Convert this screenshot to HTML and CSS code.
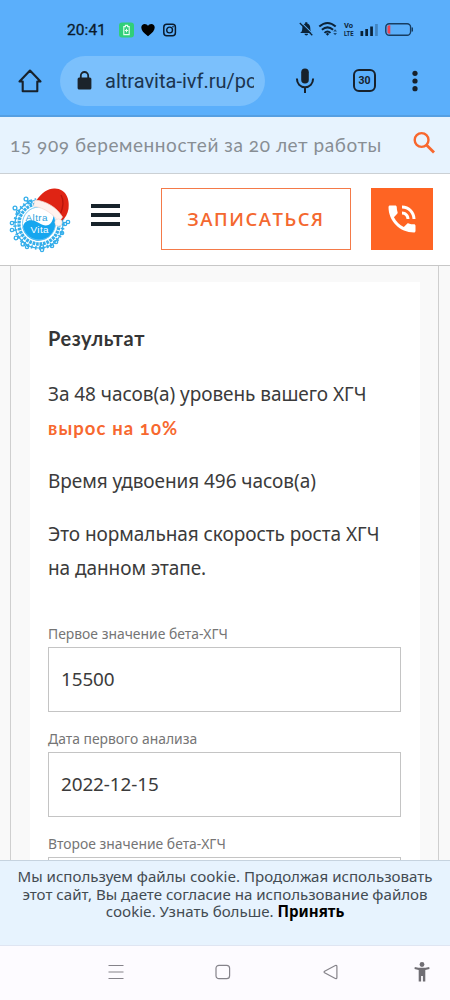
FILE: index.html
```
<!DOCTYPE html>
<html lang="ru">
<head>
<meta charset="utf-8">
<title>АльтраВита — калькулятор ХГЧ</title>
<link rel="stylesheet" href="styles.css">
</head>
<body>
<div class="phone">
  <div class="browser">
    <div class="status">
      <span class="clock">20:41</span>
      <svg class="status-left" width="60" height="16" viewBox="0 0 60 16">
        <rect x="0" y="0.5" width="15" height="15" rx="3" fill="#31cf79"/>
        <path d="M6.4 3.4h2.2v1.2h1.6v8H4.8v-8h1.6z" fill="none" stroke="#e8fff1" stroke-width="1.1"/>
        <path d="M7.5 6.8v3.4M5.9 8.5h3.2" stroke="#e8fff1" stroke-width="1.1"/>
        <path d="M29 14.2C24.5 10.8 22.3 8.4 22.3 5.5C22.3 3.3 23.9 2 25.7 2C27.1 2 28.3 2.7 29 3.9C29.7 2.7 30.9 2 32.3 2C34.2 2 35.7 3.3 35.7 5.5C35.7 8.4 33.5 10.8 29 14.2z" fill="#000"/>
        <rect x="44.800" y="2.200" width="11.600" height="11.600" rx="3" fill="none" stroke="#0a1a2c" stroke-width="1.500"/>
        <circle cx="50.600" cy="8" r="2.900" fill="none" stroke="#0a1a2c" stroke-width="1.400"/>
        <circle cx="54" cy="4.700" r="0.800" fill="#0a1a2c"/>
      </svg>
      <svg class="status-right" width="118" height="18" viewBox="0 0 118 18">
        <path d="M1 13h12.500c-1.700-1-2.200-2.500-2.200-4.800C11.300 5.500 10 4 8.300 3.600V2.200H6.200v1.400C4.500 4 3.300 5.500 3.300 8.200c0 2.300-.6 3.800-2.300 4.800zM5.500 13.800h3.600c-.2 2.200-3.400 2.200-3.600 0z" fill="#0b2338"/>
        <path d="M1.900 2.200L14.200 14.300" stroke="#5baffb" stroke-width="1.100"/>
        <path d="M0.800 3L13.300 15.300" stroke="#0b2338" stroke-width="1.300"/>
        <g fill="none" stroke="#0b2338" stroke-width="2">
          <path d="M20.300 6.600Q28.500-.6 36.700 6.600M22.900 9.800Q28.500 5 34.100 9.800M25.500 12.900Q28.500 10 31.500 12.900"/>
        </g>
        <path d="M26.800 14l1.700 1.800 1.700-1.800-1.700-1.200z" fill="#0b2338"/>
        <path d="M34.200 11.600l1.900-2.300 1.900 2.300zM34.200 13l1.900 2.300 1.900-2.300z" fill="#1c4e7c"/>
        <text x="45" y="8.300" class="volte" textLength="9" lengthAdjust="spacingAndGlyphs">Vo</text>
        <text x="45" y="15.900" class="volte" textLength="9.500" lengthAdjust="spacingAndGlyphs">LTE</text>
        <path d="M61.500 11h2.700v5h-2.700zM66.300 9h2.700v7h-2.700zM71.200 6.500h2.700V16h-2.700z" fill="#0b2338"/>
        <path d="M76.100 4h2.700v12h-2.700z" fill="#4384bf"/>
        <rect x="86.800" y="3.800" width="24.800" height="11.400" rx="3.500" fill="none" stroke="#173d61" stroke-width="1.400"/>
        <path d="M88.500 6.500q0-1.300 2.800-1.200v8.400q-2.800.1-2.800-1.200z" fill="#f2404e"/>
        <path d="M112.600 7.400h1.400v4.200h-1.400z" fill="#173d61"/>
      </svg>
    </div>
    <div class="toolbar">
      <svg class="home" width="24" height="24" viewBox="0 0 24 24" fill="none" stroke="#17212b" stroke-width="2.100" stroke-linejoin="round">
        <path d="M1.500 12.500L12 1.500l10.500 11H19.300v9.800H4.700v-9.800z"/>
      </svg>
      <div class="address">
        <svg width="15" height="19" viewBox="0 0 15 19">
          <path d="M3.800 8V4.700a3.700 3.700 0 0 1 7.400 0V8" fill="none" stroke="#1b232b" stroke-width="1.800"/>
          <rect x="0.600" y="6.500" width="13.800" height="12" rx="1.500" fill="#1b232b"/>
        </svg>
        <span class="url">altravita-ivf.ru/po</span>
      </div>
      <svg class="mic" width="20" height="26" viewBox="0 0 20 26">
        <rect x="6.200" y="0.500" width="7.600" height="15" rx="3.800" fill="#17212b"/>
        <path d="M1.900 10.500c0 5.300 3.400 8.700 8.100 8.700s8.100-3.400 8.100-8.700M10 19v6" fill="none" stroke="#17212b" stroke-width="2"/>
      </svg>
      <div class="tabs">30</div>
      <svg class="dots" width="6" height="22" viewBox="0 0 6 22" fill="#17212b"><circle cx="3" cy="3.300" r="2.600"/><circle cx="3" cy="11" r="2.600"/><circle cx="3" cy="18.700" r="2.600"/></svg>
    </div>
  </div>

  <div class="banner">
    <span class="slogan">15 909 беременностей за 20 лет работы</span>
    <svg width="24" height="24" viewBox="0 0 24 24" fill="none" stroke="#f8672d" stroke-width="2.400"><circle cx="9.600" cy="9" r="6.900"/><path d="M14.500 14l7.500 7.500" stroke-width="2.900"/></svg>
  </div>

  <header class="site-header">
    <svg class="logo" width="64" height="66" viewBox="0 0 64 66">
      <g fill="none" stroke="#35aeea">
        <circle cx="30" cy="37" r="20" stroke-width="3.400" stroke-dasharray="2.700 .8"/>
        <circle cx="30" cy="37" r="24" stroke-width="1.200"/>
        <circle cx="30" cy="37" r="24" stroke-width="3.600" stroke-dasharray="1.500 2.500"/>
        <g stroke-width="1.300">
          <circle cx="17" cy="12" r="1.900"/><circle cx="21" cy="15" r="1.600"/>
          <circle cx="6" cy="21" r="1.900"/><circle cx="9" cy="25" r="1.600"/>
          <circle cx="3" cy="36" r="1.700"/><circle cx="3" cy="43" r="1.700"/>
          <circle cx="7" cy="51" r="1.800"/><circle cx="14" cy="57" r="1.900"/><circle cx="18" cy="60" r="1.600"/>
          <circle cx="33" cy="63" r="1.600"/><circle cx="33" cy="59.500" r="1.600"/>
          <circle cx="43" cy="59" r="1.700"/><circle cx="47" cy="55" r="1.700"/>
          <circle cx="53" cy="46" r="1.700"/><circle cx="56" cy="37" r="1.700"/><circle cx="59" cy="35" r="1.700"/>
        </g>
      </g>
      <circle cx="30" cy="36.500" r="18" fill="#fff"/>
      <path d="M13.500 41c2-10 10.500-9 16.500-5s13 4 14.500-7a16.500 16.500 0 0 1-1 17a16.500 16.500 0 0 1-30-5z" fill="#16a6ef"/>
      <circle cx="30" cy="36.500" r="16.500" fill="none" stroke="#6cc5f3" stroke-width="0.900"/>
      <text x="16.500" y="33.500" class="logo-text logo-top" textLength="22">Altra</text>
      <text x="21.500" y="46" class="logo-text logo-bottom" textLength="18">Vita</text>
      <path d="M27 14C33 5 40 1 46 1.500C57 2 61 12 59.500 22c-1 5-3 9-7 12l-5-8c-4-7-12-10-20.500-12z" fill="#df2414"/>
      <path d="M52 8c3 5 2 13-1 20" stroke="#b9140c" stroke-width="1.400" fill="none"/>
      <path d="M26 13c11 1 21.500 7 27.500 17l-3.500 5C44 27 36 21 24.500 19z" fill="#fff2ee" stroke="#f2d8d1" stroke-width="0.700"/>
      <circle cx="49.500" cy="35.500" r="3.600" fill="#fff6f3" stroke="#edd9d4" stroke-width="0.600"/>
    </svg>
    <div class="burger"><i></i><i></i><i></i></div>
    <div class="signup">ЗАПИСАТЬСЯ</div>
    <div class="call">
      <svg width="36" height="36" viewBox="0 0 24 24" fill="#fff"><path d="M20 15.500c-1.250 0-2.450-.2-3.570-.57-.1-.03-.21-.05-.31-.05-.26 0-.51.1-.71.290l-2.200 2.200c-2.830-1.440-5.150-3.750-6.590-6.590l2.200-2.200c.28-.28.36-.67.25-1.020C8.700 6.450 8.500 5.250 8.500 4c0-.55-.45-1-1-1H4c-.55 0-1 .45-1 1 0 9.390 7.610 17 17 17 .55 0 1-.45 1-1v-3.500c0-.55-.45-1-1-1zM19 12h2c0-4.970-4.030-9-9-9v2c3.870 0 7 3.130 7 7zm-4 0h2c0-2.760-2.240-5-5-5v2c1.660 0 3 1.340 3 3z"/></svg>
    </div>
  </header>

  <main class="page">
    <div class="frame">
      <section class="card">
        <h2>Результат</h2>
        <p class="growth">За 48 часов(а) уровень вашего ХГЧ<br><strong>вырос на 10%</strong></p>
        <p class="doubling">Время удвоения 496 часов(а)</p>
        <p class="verdict">Это нормальная скорость роста ХГЧ<br>на данном этапе.</p>
        <div class="field"><span class="label">Первое значение бета-ХГЧ</span><div class="input">15500</div></div>
        <div class="field"><span class="label">Дата первого анализа</span><div class="input">2022-12-15</div></div>
        <div class="field"><span class="label">Второе значение бета-ХГЧ</span><div class="input"></div></div>
      </section>
    </div>
  </main>

  <div class="cookie">
    Мы используем файлы cookie. Продолжая использовать<br>
    этот сайт, Вы даете согласие на использование файлов<br>
    cookie. Узнать больше. <b>Принять</b>
  </div>

  <nav class="system-nav">
    <svg class="recent" width="16" height="16" viewBox="0 0 16 16" stroke="#85838a" stroke-width="1.200"><path d="M0.500 1.500h15M0.500 8h15M0.500 14.500h15"/></svg>
    <svg class="square" width="16" height="16" viewBox="0 0 16 16" fill="none" stroke="#85838a" stroke-width="1.200"><rect x="1" y="1.300" width="13.600" height="13.400" rx="3"/></svg>
    <svg class="back" width="16" height="16" viewBox="0 0 16 16" fill="none" stroke="#85838a" stroke-width="1.200"><path d="M1.600 7.200L12.300 1.500q1.600-.5 1.600 1v11q0 1.500-1.600 1L1.600 8.800q-1-.8 0-1.600z"/></svg>
    <svg class="access" width="16" height="20" viewBox="0 0 16 20" fill="#706e74"><circle cx="8" cy="2.500" r="2.400"/><path d="M0.800 4.900Q8 6.700 15.200 4.900l.3 2.100q-2.100.7-4.200.9V19.500H8.900V14H7.100v5.500H4.700V7.900Q2.600 7.700.5 7z"/></svg>
  </nav>
</div>
</body>
</html>
```
FILE: styles.css
```
* { box-sizing: border-box; }
body { margin: 0; font-family: "Noto Sans", "Open Sans", sans-serif; color: #3b3b3b; }
svg { display: block; flex: none; overflow: visible; }
.phone { width: 450px; height: 1000px; display: flex; flex-direction: column; overflow: hidden; background: #fff; }

.browser { height: 117px; flex: none; background: #5baffb; border-bottom: 2px solid #559fe2; }
.status { height: 53px; padding: 7px 34px 0 67px; display: flex; align-items: center; }
.clock { width: 52px; flex: none; font: 400 15.500px/18px Roboto, sans-serif; letter-spacing: 0.1px; color: #0b1b2b; -webkit-text-stroke: 0.3px #0b1b2b; }
.status-left { margin-right: -1px; }
.status-right { margin-left: 121px; margin-top: -2px; }
.volte { font: 700 8px Roboto, sans-serif; fill: #0b2338; }
.toolbar { height: 55px; display: flex; align-items: center; padding-left: 18px; }
.address { width: 205px; height: 50px; margin-left: 18px; padding-left: 17px; border-radius: 25px; background: #7bc0fc; display: flex; align-items: center; overflow: hidden; }
.url { width: 149px; margin-left: 13px; overflow: hidden; white-space: nowrap; font: 20px/28px Roboto, sans-serif; color: #1c3550; }
.mic { margin-left: 30px; }
.tabs { width: 23px; height: 23px; margin-left: 38px; border: 2px solid #17212b; border-radius: 6px; font: 700 10.500px/19px Roboto, sans-serif; text-align: center; color: #17212b; }
.dots { margin-left: 36px; }

.banner { height: 57px; flex: none; background: #e7f3fe; border-bottom: 1px solid #cbd0d4; display: flex; align-items: center; justify-content: space-between; padding: 0 14px 4px 10px; }
.slogan { padding-top: 3px; font: 19px/26px Lato, sans-serif; font-variant-numeric: oldstyle-nums; letter-spacing: 0.560px; color: #888e94; white-space: nowrap; }

.site-header { height: 92px; flex: none; border-bottom: 1px solid #c7c7c7; display: flex; align-items: flex-start; padding: 14px 17px 0 9px; }
.logo { margin-top: -1px; }
.logo-text { font: 9.800px "Liberation Sans", sans-serif; }
.logo-top { fill: #2b9fdc; }
.logo-bottom { fill: #fff; }
.burger { width: 29px; margin: 16px 0 0 18px; display: flex; flex-direction: column; gap: 5px; }
.burger i { height: 4px; background: #17232b; }
.signup { width: 190px; height: 62px; margin-left: 41px; border: 1px solid #f47a49; font: 600 18.500px/59px "Open Sans", sans-serif; letter-spacing: 1.550px; text-align: center; color: #f4682f; }
.call { width: 62px; height: 62px; margin-left: 20px; background: #fe6423; display: flex; align-items: center; justify-content: center; }

.page { flex: 1; min-height: 0; overflow: hidden; background: #f9f9f9; padding: 0 11px 0 10px; }
.frame { border: solid #cfcfcf; border-width: 0 1px; padding: 16px 18px 0 19px; }
.card { background: #fff; padding: 39px 19px 0 18px; height: 620px; }
h2 { margin: 0; height: 34px; font: 700 20px/35px Lato, sans-serif; letter-spacing: 0.600px; color: #353535; }
p { margin: 0; font-size: 19px; letter-spacing: -0.060px; line-height: 34px; white-space: nowrap; }
.growth { margin-top: 22px; }
.growth strong { font: 700 18.500px/34px Lato, sans-serif; font-variant-numeric: oldstyle-nums; letter-spacing: 1.100px; color: #f7682f; }
.doubling, .verdict { margin-top: 19px; }
.verdict { margin-bottom: 39px; }
.field { margin-bottom: 17px; }
.label { display: block; height: 23px; font-size: 13.900px; line-height: 20px; color: #757575; white-space: nowrap; }
.input { width: 353px; height: 65px; border: 1px solid #c4c4c4; padding-left: 12px; font-size: 18.900px; letter-spacing: -0.1px; line-height: 63px; }

.cookie { height: 86px; flex: none; border-top: 1px solid #c6d3df; background: #e7f3fe; padding-top: 7px; border-bottom: 1px solid #dfe5f2; font-size: 15.100px; line-height: 17.500px; text-align: center; white-space: nowrap; color: #434b52; }
.cookie b { font-weight: 700; color: #000; }
.system-nav { height: 54px; flex: none; background: #fdfbff; display: flex; align-items: center; padding: 0 0 2px 108px; }
.square { margin-left: 91px; }
.back { margin-left: 92px; }
.access { margin-left: 75px; }
```
